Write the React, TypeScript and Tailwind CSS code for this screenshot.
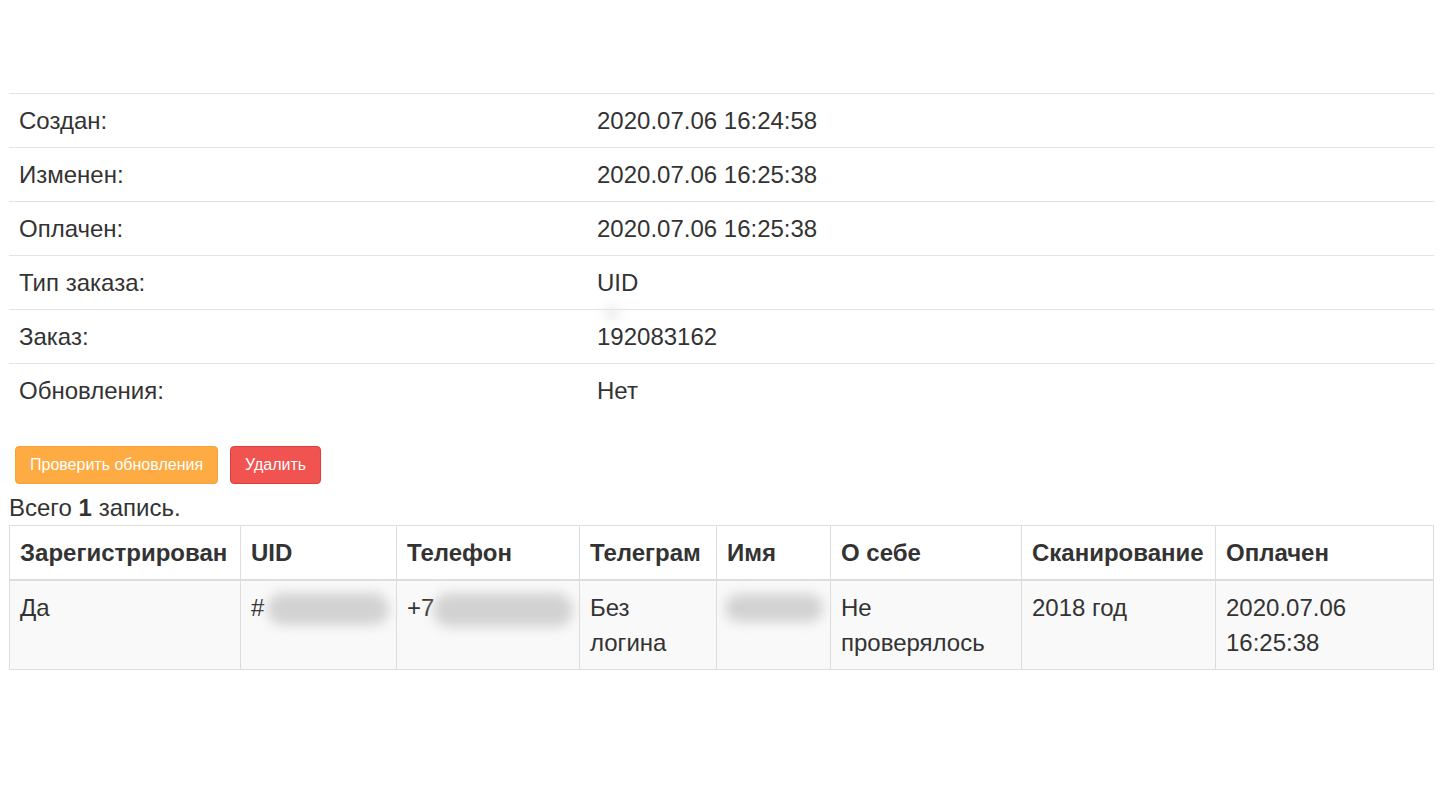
const info = [
  ["Создан:", "2020.07.06 16:24:58"],
  ["Изменен:", "2020.07.06 16:25:38"],
  ["Оплачен:", "2020.07.06 16:25:38"],
  ["Тип заказа:", "UID"],
  ["Заказ:", "192083162"],
  ["Обновления:", "Нет"],
];

const cols = [
  { title: "Зарегистрирован", w: "w-[231px]" },
  { title: "UID", w: "w-[156px]" },
  { title: "Телефон", w: "w-[183px]" },
  { title: "Телеграм", w: "w-[137px]" },
  { title: "Имя", w: "w-[114px]" },
  { title: "О себе", w: "w-[191px]" },
  { title: "Сканирование", w: "w-[194px]" },
  { title: "Оплачен", w: "" },
];

function Blur({ className }: { className: string }) {
  return <span className={"absolute rounded-full bg-[#d2d2d2] blur-[6px] " + className} />;
}

export default function App() {
  return (
    <div className="min-h-screen bg-white pl-[9px] pr-[6px] pt-[93px] text-[24px] leading-[35px] text-[#333] [font-family:'Liberation_Sans',Arial,sans-serif]">
      <table className="w-full border-collapse">
        <tbody>
          {info.map(([k, v]) => (
            <tr key={k} className="border-t border-[#e3e3e3]">
              <td className="w-[578px] px-[10px] py-[9px]">{k}</td>
              <td className="relative px-[10px] py-[9px]">
                {v === "192083162" && <Blur className="left-[18px] -top-[2px] h-[10px] w-[14px] bg-[#e2e2e2]" />}
                <span className="relative">{v}</span>
              </td>
            </tr>
          ))}
        </tbody>
      </table>

      <div className="mt-[29px] ml-[6px] flex gap-[12px]">
        <button className="h-[38px] rounded-[4px] border border-[#f5a338] bg-[#fdab42] px-[14px] text-[16px] leading-none text-white">
          Проверить обновления
        </button>
        <button className="h-[38px] rounded-[4px] border border-[#dc3f3b] bg-[#f05350] px-[14px] text-[16px] leading-none text-white">
          Удалить
        </button>
      </div>

      <div className="mt-[9px] mb-[2px] leading-[30px]">
        Всего <b>1</b> запись.
      </div>

      <table className="w-full border-collapse border border-[#ddd]">
        <thead>
          <tr>
            {cols.map((c) => (
              <th
                key={c.title}
                className={"border border-b-2 border-[#ddd] px-[10px] py-[9px] text-left font-bold " + c.w}
              >
                {c.title}
              </th>
            ))}
          </tr>
        </thead>
        <tbody>
          <tr className="bg-[#f9f9f9] align-top">
            <td className="border border-[#ddd] px-[10px] py-[9px]">Да</td>
            <td className="relative border border-[#ddd] px-[10px] py-[9px]">
              #
              <Blur className="left-[26px] top-[12px] h-[32px] w-[122px]" />
            </td>
            <td className="relative border border-[#ddd] px-[10px] py-[9px]">
              +7
              <Blur className="left-[36px] top-[12px] h-[34px] w-[140px]" />
            </td>
            <td className="border border-[#ddd] px-[10px] py-[9px]">
              Без
              <br />
              логина
            </td>
            <td className="relative border border-[#ddd] px-[10px] py-[9px]">
              <Blur className="left-[8px] top-[13px] h-[28px] w-[98px]" />
            </td>
            <td className="border border-[#ddd] px-[10px] py-[9px]">
              Не
              <br />
              проверялось
            </td>
            <td className="border border-[#ddd] px-[10px] py-[9px]">2018 год</td>
            <td className="border border-[#ddd] px-[10px] py-[9px]">
              2020.07.06
              <br />
              16:25:38
            </td>
          </tr>
        </tbody>
      </table>
    </div>
  );
}
